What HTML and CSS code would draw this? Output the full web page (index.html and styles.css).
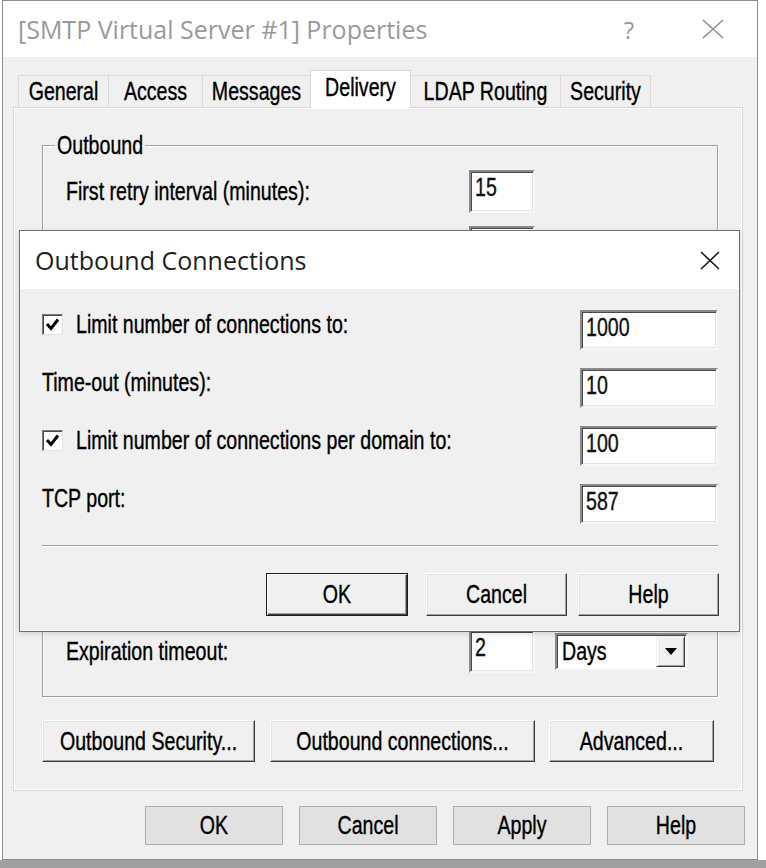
FILE: index.html
```html
<!DOCTYPE html>
<html lang="en">
<head>
<meta charset="utf-8">
<title>[SMTP Virtual Server #1] Properties</title>
<link rel="stylesheet" href="styles.css">
</head>
<body>
<div class="window">
  <div class="titlebar">
    <span class="title">[SMTP Virtual Server #1] Properties</span>
    <span class="help">?</span>
    <svg class="close" width="22" height="20" viewBox="0 0 22 20"><path d="M1 1 L21 19 M21 1 L1 19" stroke="#8f8f8f" stroke-width="1.6" fill="none"/></svg>
  </div>

  <div class="tabs">
    <div class="tab tab-general"><span class="t">General</span></div>
    <div class="tab tab-access"><span class="t">Access</span></div>
    <div class="tab tab-messages"><span class="t">Messages</span></div>
    <div class="tab tab-delivery active"><span class="t">Delivery</span></div>
    <div class="tab tab-ldap"><span class="t">LDAP Routing</span></div>
    <div class="tab tab-security"><span class="t">Security</span></div>
  </div>

  <div class="panel">
    <fieldset class="group">
      <legend><span class="t">Outbound</span></legend>
      <div class="rows">
        <div class="row"><span class="lbl t">First retry interval (minutes):</span><div class="edit"><span class="t">15</span></div></div>
        <div class="row"><span class="lbl t">Second retry interval (minutes):</span><div class="edit"><span class="t">10</span></div></div>
        <div class="row"><span class="lbl t">Third retry interval (minutes):</span><div class="edit"><span class="t">10</span></div></div>
        <div class="row"><span class="lbl t">Subsequent retry interval (minutes):</span><div class="edit"><span class="t">15</span></div></div>
        <div class="row"><span class="lbl t">Delay notification:</span><div class="edit"><span class="t">12</span></div><span></span><div class="combo"><span class="combo-text t">Hours</span><span class="combo-btn"><span class="tri"></span></span></div></div>
        <div class="row"><span class="lbl t">Expiration timeout:</span><div class="edit"><span class="t">2</span></div><span></span><div class="combo"><span class="combo-text t">Days</span><span class="combo-btn"><span class="tri"></span></span></div></div>
      </div>
    </fieldset>

    <fieldset class="group local">
      <legend><span class="t">Local</span></legend>
      <div class="rows">
        <div class="row"><span class="lbl t">Delay notification:</span><div class="edit"><span class="t">12</span></div><span></span><div class="combo"><span class="combo-text t">Hours</span><span class="combo-btn"><span class="tri"></span></span></div></div>
        <div class="row"><span class="lbl t">Expiration timeout:</span><div class="edit"><span class="t">2</span></div><span></span><div class="combo"><span class="combo-text t">Days</span><span class="combo-btn"><span class="tri"></span></span></div></div>
      </div>
    </fieldset>

    <div class="btnrow">
      <button class="cbtn b-sec"><span class="t">Outbound Security...</span></button>
      <button class="cbtn b-conn"><span class="t">Outbound connections...</span></button>
      <button class="cbtn b-adv"><span class="t">Advanced...</span></button>
    </div>
  </div>

  <div class="footer">
    <button class="wbtn"><span class="t">OK</span></button>
    <button class="wbtn"><span class="t">Cancel</span></button>
    <button class="wbtn"><span class="t">Apply</span></button>
    <button class="wbtn"><span class="t">Help</span></button>
  </div>

  <div class="dialog">
    <div class="dlg-title">
      <span class="dlg-caption">Outbound Connections</span>
      <svg class="dlg-close" width="20" height="19" viewBox="0 0 20 19"><path d="M1 1 L19 18 M19 1 L1 18" stroke="#1a1a1a" stroke-width="1.6" fill="none"/></svg>
    </div>
    <div class="dlg-body">
      <div class="drow">
        <label class="dlbl"><span class="check"><svg width="17" height="17" viewBox="0 0 17 17"><path d="M3 8 L7 12.5 L14 3.5" stroke="#000" stroke-width="3" fill="none"/></svg></span><span class="t">Limit number of connections to:</span></label>
        <div class="edit wide"><span class="t">1000</span></div>
      </div>
      <div class="drow">
        <span class="dlbl"><span class="t">Time-out (minutes):</span></span>
        <div class="edit wide"><span class="t">10</span></div>
      </div>
      <div class="drow">
        <label class="dlbl"><span class="check"><svg width="17" height="17" viewBox="0 0 17 17"><path d="M3 8 L7 12.5 L14 3.5" stroke="#000" stroke-width="3" fill="none"/></svg></span><span class="t">Limit number of connections per domain to:</span></label>
        <div class="edit wide"><span class="t">100</span></div>
      </div>
      <div class="drow">
        <span class="dlbl"><span class="t">TCP port:</span></span>
        <div class="edit wide"><span class="t">587</span></div>
      </div>
      <div class="sep"></div>
      <div class="dlg-buttons">
        <button class="cbtn def b-ok"><span class="t">OK</span></button>
        <button class="cbtn b-cancel"><span class="t">Cancel</span></button>
        <button class="cbtn b-help"><span class="t">Help</span></button>
      </div>
    </div>
  </div>
</div>
<div class="strip"></div>
</body>
</html>
```

FILE: styles.css
```css
* { box-sizing: border-box; }

html, body {
  margin: 0;
  padding: 0;
}

body {
  width: 766px;
  height: 868px;
  overflow: hidden;
  background: #ffffff;
  font-family: "Liberation Sans", Arial, sans-serif;
  font-size: 19.6px;
  color: #000;
}

/* MS Sans Serif look: tall, narrow glyphs */
.t {
  display: inline-block;
  transform: scaleY(1.28);
  white-space: nowrap;
  -webkit-text-stroke: 0.3px currentColor;
}

.window {
  position: relative;
  margin-left: 2px;
  width: 756px;
  height: 860px;
  border: 1px solid #8c8c8c;
  background: #f0f0f0;
}

/* ---------- title bar ---------- */
.titlebar {
  height: 56px;
  background: #ffffff;
  display: flex;
  align-items: center;
  padding-left: 15px;
  font-family: "Open Sans", "Noto Sans", sans-serif;
}

.title {
  flex: 1;
  font-size: 25px;
  color: #9a9a9a;
  white-space: nowrap;
}

.help {
  font-size: 24px;
  color: #9a9a9a;
  margin-right: 68px;
}

.close {
  margin-right: 33px;
}

/* ---------- tabs ---------- */
.tabs {
  height: 50px;
  display: flex;
  align-items: flex-end;
  padding-left: 15px;
}

.tab {
  position: relative;
  height: 32px;
  margin-left: -1px;
  display: flex;
  align-items: center;
  justify-content: center;
  border: 1px solid #d9d9d9;
  border-bottom: none;
  background: #f0f0f0;
  white-space: nowrap;
}

.tab:first-child { margin-left: 0; }

.tab-general { width: 91px; }
.tab-access { width: 95px; }
.tab-messages { width: 109px; }
.tab-delivery { width: 101px; }
.tab-ldap { width: 151px; }
.tab-security { width: 91px; }

.tab.active {
  z-index: 2;
  height: 38px;
  margin-bottom: -1px;
  padding-bottom: 4px;
  background: #ffffff;
}

/* ---------- tab panel ---------- */
.panel {
  position: relative;
  z-index: 1;
  margin-left: 10px;
  width: 730px;
  height: 684px;
  padding-top: 25px;
  border: 1px solid #d9d9d9;
  box-shadow: inset 1px 1px 0 #ffffff, inset -1px -1px 0 #ffffff;
  background: #f0f0f0;
}

.group {
  margin: 0 0 0 28px;
  width: 676px;
  min-width: 0;
  padding: 13px 23px 20px 23px;
  border: 1px solid #a0a0a0;
  box-shadow: inset 1px 1px 0 #ffffff, 1px 1px 0 #ffffff;
}

.group.local {
  margin-top: 23px;
  padding-bottom: 23px;
}

.group legend {
  margin-left: -11px;
  padding: 0 2px;
  line-height: 24px;
  height: 24px;
}

.rows {
  display: flex;
  flex-direction: column;
  gap: 13px;
}

.row {
  height: 43px;
  display: grid;
  grid-template-columns: 403px 66px 20px 133px;
  align-items: center;
}

.lbl {
  justify-self: start;
}

/* sunken edit box */
.edit {
  height: 43px;
  padding: 0 3px 0 4px;
  line-height: 30px;
  background: #ffffff;
  border: 2px solid;
  border-color: #8a8a8a #f7f7f7 #f7f7f7 #8a8a8a;
  box-shadow: inset 1px 1px 0 #4a4a4a, inset -1px -1px 0 #e3e3e3;
  color: #111;
}

.edit.wide {
  height: 40px;
}

/* combo box */
.combo {
  height: 37px;
  display: flex;
  align-items: center;
  background: #ffffff;
  border: 2px solid;
  border-color: #8a8a8a #f7f7f7 #f7f7f7 #8a8a8a;
  box-shadow: inset 1px 1px 0 #4a4a4a;
}

.combo-text {
  flex: 1;
  padding-left: 5px;
}

.combo-btn {
  width: 29px;
  height: 31px;
  margin-right: 1px;
  display: flex;
  align-items: center;
  justify-content: center;
  background: #f0f0f0;
  border: 1px solid;
  border-color: #f0f0f0 #3c3c3c #3c3c3c #f0f0f0;
  box-shadow: inset 1px 1px 0 #ffffff, inset -1px -1px 0 #a0a0a0;
}

.tri {
  width: 0;
  height: 0;
  border-left: 6px solid transparent;
  border-right: 6px solid transparent;
  border-top: 7px solid #000;
}

/* classic 3D buttons */
.cbtn {
  font-family: inherit;
  font-size: inherit;
  color: #000;
  padding: 0;
  height: 42px;
  background: #f0f0f0;
  border: 1px solid;
  border-color: #ffffff #3c3c3c #3c3c3c #ffffff;
  box-shadow: inset -1px -1px 0 #a0a0a0, inset 1px 1px 0 #e3e3e3;
  white-space: nowrap;
}

.cbtn.def {
  border-color: #1e1e1e;
  box-shadow: inset 1px 1px 0 #ffffff, inset -1px -1px 0 #3c3c3c, inset -2px -2px 0 #a0a0a0;
}

.btnrow {
  display: flex;
  margin: 23px 0 0 28px;
}

.b-sec { width: 213px; }
.b-conn { width: 265px; margin-left: 15px; }
.b-adv { width: 165px; margin-left: 14px; }

/* bottom Win10 buttons */
.footer {
  margin-top: 15px;
  display: flex;
  justify-content: flex-end;
  gap: 16px;
  padding-right: 12px;
}

.wbtn {
  width: 138px;
  height: 39px;
  padding: 0;
  font-family: inherit;
  font-size: inherit;
  color: #000;
  background: #e1e1e1;
  border: 1px solid #adadad;
}

/* ---------- overlay dialog ---------- */
.dialog {
  position: absolute;
  z-index: 10;
  left: 16px;
  top: 229px;
  width: 721px;
  height: 402px;
  border: 1px solid #707070;
  background: #f0f0f0;
  box-shadow: 0 2px 6px rgba(0, 0, 0, 0.12);
}

.dlg-title {
  height: 58px;
  display: flex;
  align-items: center;
  padding-left: 15px;
  background: #ffffff;
  font-family: "Open Sans", "Noto Sans", sans-serif;
}

.dlg-caption {
  flex: 1;
  font-size: 25px;
  color: #1e1e1e;
}

.dlg-close {
  margin-right: 19px;
}

.dlg-body {
  padding: 21px 0 0 22px;
}

.drow {
  height: 40px;
  margin-bottom: 18px;
  display: grid;
  grid-template-columns: 1fr 138px;
  padding-right: 21px;
}

.drow:nth-child(4) { margin-bottom: 0; }

.dlbl {
  align-self: start;
  justify-self: start;
  display: flex;
  align-items: center;
  gap: 13px;
  height: 28px;
  white-space: nowrap;
}

.check {
  width: 21px;
  height: 21px;
  display: flex;
  align-items: center;
  justify-content: center;
  background: #ffffff;
  border: 1px solid;
  border-color: #7a7a7a #e3e3e3 #e3e3e3 #7a7a7a;
  box-shadow: inset 1px 1px 0 #4a4a4a;
}

.sep {
  margin: 21px 21px 0 0;
  height: 2px;
  border-top: 1px solid #a0a0a0;
  border-bottom: 1px solid #ffffff;
}

.dlg-buttons {
  margin-top: 26px;
  display: flex;
  justify-content: flex-end;
  padding-right: 20px;
}

.dlg-buttons .cbtn { height: 43px; }
.b-ok { width: 142px; margin-right: 18px; }
.b-cancel { width: 141px; margin-right: 11px; }
.b-help { width: 141px; }

.strip {
  height: 8px;
  background: #a0a0a0;
}
```
